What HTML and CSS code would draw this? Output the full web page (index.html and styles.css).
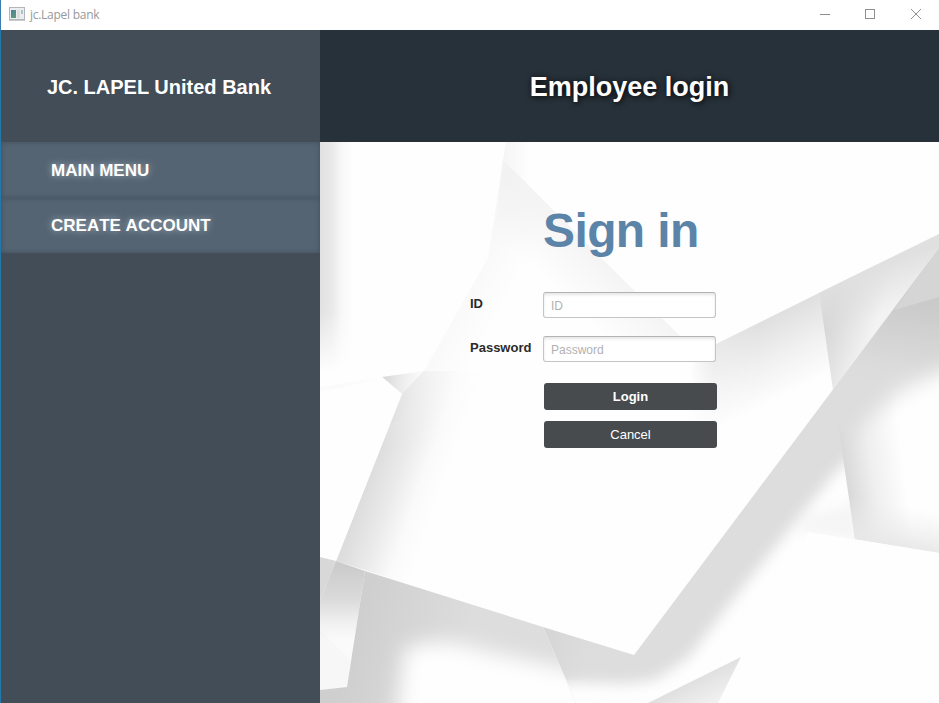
FILE: index.html
```html
<!DOCTYPE html>
<html lang="en">
<head>
<meta charset="utf-8">
<title>jc.Lapel bank</title>
<link rel="stylesheet" href="styles.css">
</head>
<body>
<div class="window">
  <header class="titlebar">
    <svg class="app-icon" width="16" height="14" viewBox="0 0 16 14">
      <defs><linearGradient id="ic" x1="0" y1="0" x2=".6" y2="1"><stop offset="0" stop-color="#4c7f9f"/><stop offset="1" stop-color="#5c9a78"/></linearGradient></defs>
      <rect x=".5" y=".5" width="15" height="12" fill="#eceef0" stroke="#b2b5ba"/>
      <path d="M0 13.5h16" stroke="#c9cbcf"/>
      <rect x="2" y="3" width="5" height="8" fill="url(#ic)"/>
      <rect x="8" y="3" width="3" height="8" fill="#dedede"/>
      <rect x="12" y="3" width="2" height="4" fill="#a9c5cc"/>
    </svg>
    <span class="caption">jc.Lapel bank</span>
    <svg class="controls" width="103" height="12" viewBox="0 0 103 12" fill="none" stroke="#8e8e8e">
      <path d="M0 5.5h10"/>
      <rect x="45.500" y=".5" width="9" height="9"/>
      <path d="M91 0l10 10M101 0l-10 10"/>
    </svg>
  </header>
  <div class="body">
    <aside class="sidebar">
      <div class="brand">JC. LAPEL United Bank</div>
      <nav>
        <a class="item">MAIN MENU</a>
        <a class="item">CREATE ACCOUNT</a>
      </nav>
    </aside>
    <main class="main">
      <div class="heading">Employee login</div>
      <section class="content">
        <svg class="backdrop" viewBox="320 142 619 561" width="619" height="561">
          <defs>
            <filter id="b6" x="-50%" y="-50%" width="200%" height="200%"><feGaussianBlur stdDeviation="7"/></filter>
            <filter id="b10" x="-50%" y="-50%" width="200%" height="200%"><feGaussianBlur stdDeviation="10"/></filter>
            <linearGradient id="gl" gradientUnits="userSpaceOnUse" x1="320" y1="0" x2="354" y2="0"><stop offset="0" stop-color="#e1e1e1"/><stop offset=".35" stop-color="#e9e9e9"/><stop offset=".65" stop-color="#f8f8f8"/><stop offset="1" stop-color="#fefefe"/></linearGradient>
            <linearGradient id="gv" gradientUnits="userSpaceOnUse" x1="0" y1="310" x2="0" y2="372"><stop offset="0" stop-color="#fefefe" stop-opacity="0"/><stop offset="1" stop-color="#fefefe"/></linearGradient>
            <linearGradient id="gt" gradientUnits="userSpaceOnUse" x1="503" y1="0" x2="530" y2="0"><stop offset="0" stop-color="#f5f5f5"/><stop offset="1" stop-color="#fefefe"/></linearGradient>
            <linearGradient id="gs" gradientUnits="userSpaceOnUse" x1="590" y1="245" x2="550" y2="285"><stop offset="0" stop-color="#f4f4f4"/><stop offset="1" stop-color="#f4f4f4" stop-opacity="0"/></linearGradient>
            <linearGradient id="gs2" gradientUnits="userSpaceOnUse" x1="452" y1="300" x2="495" y2="324"><stop offset="0" stop-color="#f8f8f8"/><stop offset="1" stop-color="#fefefe"/></linearGradient>
            <radialGradient id="ga" gradientUnits="userSpaceOnUse" cx="507" cy="175" r="75"><stop offset="0" stop-color="#f2f2f2"/><stop offset="1" stop-color="#f5f5f5" stop-opacity="0"/></radialGradient>
            <linearGradient id="ge" gradientUnits="userSpaceOnUse" x1="369" y1="478" x2="438" y2="502"><stop offset="0" stop-color="#dddddd"/><stop offset=".35" stop-color="#eaeaea"/><stop offset=".7" stop-color="#fafafa"/><stop offset="1" stop-color="#fefefe"/></linearGradient>
            <linearGradient id="gefade" gradientUnits="userSpaceOnUse" x1="0" y1="365" x2="0" y2="445"><stop offset="0" stop-color="#fefefe" stop-opacity=".5"/><stop offset="1" stop-color="#fefefe" stop-opacity="0"/></linearGradient>
            <linearGradient id="gn" gradientUnits="userSpaceOnUse" x1="385" y1="378" x2="430" y2="385"><stop offset="0" stop-color="#d9d9d9"/><stop offset="1" stop-color="#f0f0f0" stop-opacity="0"/></linearGradient>
            <linearGradient id="gw" gradientUnits="userSpaceOnUse" x1="768" y1="318" x2="802" y2="387"><stop offset="0" stop-color="#dfdfdf"/><stop offset=".5" stop-color="#f0f0f0"/><stop offset="1" stop-color="#fefefe"/></linearGradient>
            <linearGradient id="gwl" gradientUnits="userSpaceOnUse" x1="690" y1="0" x2="760" y2="0"><stop offset="0" stop-color="#fefefe"/><stop offset=".35" stop-color="#fefefe" stop-opacity=".3"/><stop offset="1" stop-color="#fefefe" stop-opacity="0"/></linearGradient>
            <linearGradient id="gw2" gradientUnits="userSpaceOnUse" x1="823" y1="330" x2="868" y2="347"><stop offset="0" stop-color="#d6d6d6"/><stop offset=".6" stop-color="#e7e7e7"/><stop offset="1" stop-color="#f3f3f3"/></linearGradient>
            <linearGradient id="gw3" gradientUnits="userSpaceOnUse" x1="875" y1="265" x2="890" y2="312"><stop offset="0" stop-color="#e0e0e0"/><stop offset="1" stop-color="#e2e2e2" stop-opacity="0"/></linearGradient>
            <linearGradient id="gr" gradientUnits="userSpaceOnUse" x1="844" y1="460" x2="902" y2="452"><stop offset="0" stop-color="#d9d9d9"/><stop offset=".45" stop-color="#efefef"/><stop offset="1" stop-color="#fefefe"/></linearGradient>
            <linearGradient id="gr2" gradientUnits="userSpaceOnUse" x1="900" y1="505" x2="893" y2="546"><stop offset="0" stop-color="#eeeeee" stop-opacity="0"/><stop offset="1" stop-color="#e8e8e8"/></linearGradient>
            <linearGradient id="gd" gradientUnits="userSpaceOnUse" x1="915" y1="300" x2="905" y2="375"><stop offset="0" stop-color="#c9c9c9"/><stop offset="1" stop-color="#dddddd"/></linearGradient>
            <linearGradient id="gb" gradientUnits="userSpaceOnUse" x1="0" y1="565" x2="0" y2="640"><stop offset="0" stop-color="#cbcbcb"/><stop offset=".45" stop-color="#dadada"/><stop offset=".8" stop-color="#f2f2f2"/><stop offset="1" stop-color="#fafafa"/></linearGradient>
            <linearGradient id="gc" gradientUnits="userSpaceOnUse" x1="365" y1="600" x2="470" y2="630"><stop offset="0" stop-color="#cfcfcf"/><stop offset="1" stop-color="#dddddd"/></linearGradient>
            <linearGradient id="gf" gradientUnits="userSpaceOnUse" x1="550" y1="640" x2="600" y2="655"><stop offset="0" stop-color="#cfcfcf"/><stop offset="1" stop-color="#dbdbdb" stop-opacity="0"/></linearGradient>
            <linearGradient id="gk" gradientUnits="userSpaceOnUse" x1="690" y1="675" x2="705" y2="705"><stop offset="0" stop-color="#dcdcdc"/><stop offset="1" stop-color="#f0f0f0"/></linearGradient>
            <clipPath id="cd"><path d="M939 248L634 655L543 627L576 703H939z"/></clipPath>
            <clipPath id="cr"><path d="M939 248L833 390L855 539L939 553z"/></clipPath>
            <clipPath id="cc"><path d="M365 571L543 627L576 703H320V690L347 687z"/></clipPath>
          </defs>
          <path fill="#fefefe" d="M320 142h619v561H320z"/>
          <path fill="url(#gl)" d="M320 142h36v245h-36z"/><path fill="url(#gv)" d="M320 300h40v87h-40z"/>
          <path fill="url(#gt)" d="M506 142h28v50l-31-32z"/>
          <path fill="url(#gs2)" d="M503 160L488 258L424 371L402 394V450L600 440L675 335z"/>
          <path fill="url(#gs)" d="M503 160L680 336H560L490 265z"/>
          <path fill="url(#ga)" d="M503 160L590 247L490 265z"/>
          <path fill="url(#ge)" d="M424 371L402 394L336 561L440 594L510 371z"/>
          <path fill="url(#gefade)" d="M424 371L402 394L380 450H510V371z"/>
          <path fill="url(#gn)" d="M382 377L424 371H445L400 420L390 424L402 394z"/>
          <path fill="#fefefe" d="M320 387L382 377L402 394L336 561L320 557z"/>
          <path fill="#fafafa" d="M320 387L382 377L345 387L320 391z" opacity=".7"/>
          <path fill="url(#gw)" d="M692 356L819 293L833 390L780 461H692z"/>
          <path fill="url(#gwl)" d="M685 340L716 340L770 314V461H685z"/>
          <path fill="url(#gw2)" d="M819 293L939 234V248L833 390z"/>
          <path fill="url(#gw3)" d="M819 293L939 234V248L833 390z"/>
          <g clip-path="url(#cd)">
            <path fill="#fefefe" d="M540 248h399v455H540z"/>
            <path fill="#f5f5f5" filter="url(#b6)" d="M800 520L860 500V542L800 532z"/>
            <path fill="#dddddd" filter="url(#b6)" d="M970 190L600 600L500 600L530 690L575 682L625 684L655 680L688 658L738 593L834 474L900 410L970 370z"/>
            <path fill="url(#gf)" d="M543 627L610 648L600 680H567z" opacity=".5"/>
          </g>
          <g clip-path="url(#cr)">
            <path fill="url(#gr)" d="M833 240H939V560H833z"/>
            <path fill="url(#gr2)" d="M833 490H939V560H833z"/>
            <path fill="url(#gd)" filter="url(#b10)" d="M980 170L780 420L845 435L875 412L905 388L980 355z"/>
            <path fill="#d5d5d5" d="M939 248L894 310L939 297z"/>
          </g>
          <path fill="#fefefe" d="M808 532L939 553V703H718L741 657z"/>
          <path fill="#d8d8d8" d="M320 557L336 561L320 600z"/>
          <path fill="url(#gb)" d="M336 561L365 571L347 687L320 690V600z"/>
          <path fill="#ededed" d="M320 630L350 660L347 687L320 690z" opacity=".2"/>
          <g clip-path="url(#cc)">
            <path fill="url(#gc)" d="M320 560H590V703H320z"/>
            <path fill="#fefefe" filter="url(#b10)" d="M404 650Q436 634 480 650L590 674V740H394z"/>
          </g>
          <path fill="url(#gk)" d="M741 657L648 703H718z"/>
        </svg>
        <form class="form">
          <h1>Sign in</h1>
          <label for="id">ID</label><input id="id" type="text" placeholder="ID">
          <label for="pw">Password</label><input id="pw" type="password" placeholder="Password">
          <button type="button" class="login">Login</button>
          <button type="button" class="cancel">Cancel</button>
        </form>
      </section>
    </main>
  </div>
</div>
</body>
</html>
```
FILE: styles.css
```css
* { box-sizing: border-box; }
body { margin: 0; overflow: hidden; font-family: "Liberation Sans", Arial, sans-serif; }
.window { width: 939px; height: 703px; display: flex; flex-direction: column; }
.titlebar { height: 30px; display: flex; align-items: flex-start; padding: 7px 16px 0 8px; background: #fff; border-left: 1px solid #3b7fb0; }
.app-icon { flex: none; }
.caption { margin-left: 5px; font: 12px/16px "Open Sans", "Noto Sans", sans-serif; letter-spacing: -0.270px; color: #999; }
.controls { margin: 2px 0 0 auto; }
.body { flex: 1; display: flex; }
.sidebar { width: 320px; background: #424d58; border-left: 1px solid #2377a9; }
.brand { height: 112px; display: flex; align-items: center; justify-content: center; padding: 2px 3px 0 0; color: #fff; font-size: 20px; font-weight: bold; }
.item { display: flex; align-items: center; height: 55px; padding: 1px 0 0 50px; background: #546473; box-shadow: inset 0 0 5px rgba(50, 60, 70, .5); color: #fff; font-size: 17px; font-weight: bold; font-kerning: none; text-shadow: 0 0 7px rgba(255, 255, 255, .5); }
.item:first-child { height: 56px; padding-top: 2px; }
.main { flex: 1; display: flex; flex-direction: column; }
.heading { height: 112px; padding-top: 3px; background: #27313a; color: #fff; display: flex; align-items: center; justify-content: center; font-size: 27px; font-weight: bold; text-shadow: 1px 1px 6px #000; }
.content { flex: 1; display: grid; }
.backdrop, .form { grid-area: 1 / 1; }
.form { z-index: 1; align-self: start; display: grid; grid-template-columns: 73px 174px; margin: 60px 0 0 150px; }
.form h1 { grid-column: 2; margin: 0; height: 90px; font-size: 48px; line-height: 57px; letter-spacing: -0.600px; color: #5b84a8; white-space: nowrap; }
.form label { height: 44px; font-size: 13px; line-height: 23px; font-weight: bold; color: #2b2b2b; }
.form input { width: 173px; height: 26px; padding: 2px 7px 0; border: 1px solid #c5c5c5; border-top-color: #b3b3b3; border-radius: 3px; background: #fff; box-shadow: inset 0 2px 3px rgba(0, 0, 0, .1); font: 12px "Liberation Sans", Arial, sans-serif; }
.form input::placeholder { color: #b1b1b1; opacity: 1; }
.form button { grid-column: 2; width: 173px; height: 27px; margin: 0 0 11px 1px; padding: 0; border: 0; border-radius: 3px; background: #474b4e; color: #fff; font: 13px "Liberation Sans", Arial, sans-serif; }
.form .login { margin-top: 3px; font-weight: bold; }
```
